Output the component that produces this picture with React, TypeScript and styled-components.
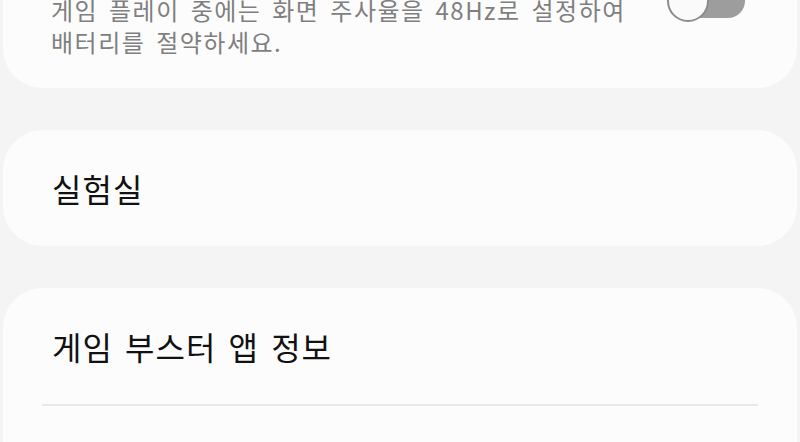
import styled, { createGlobalStyle } from "styled-components";

const GlobalStyle = createGlobalStyle`
  html, body {
    margin: 0;
    padding: 0;
    background: #f4f4f4;
    overflow: hidden;
  }
  body {
    font-family: "Noto Sans CJK KR", "Noto Sans", sans-serif;
  }
`;

const Page = styled.div`
  display: flex;
  flex-direction: column;
  gap: 42px;
  padding: 0 3px;
  margin-top: -40px;
`;

const Card = styled.section<{ $open?: boolean }>`
  background: #fcfcfc;
  border-radius: ${(p) => (p.$open ? "40px 40px 0 0" : "40px")};
  display: flex;
  flex-direction: column;
  padding-bottom: ${(p) => (p.$open ? "60px" : "0")};
`;

const SwitchRow = styled.div`
  display: flex;
  align-items: flex-start;
  justify-content: space-between;
  padding: 24px 52px 30px 48px;
`;

const Description = styled.p`
  margin: 0;
  padding-top: 10px;
  font-size: 24px;
  line-height: 32px;
  color: #7f7f7f;
  letter-spacing: 1.5px;
  word-spacing: 4px;
`;

const Toggle = styled.div`
  position: relative;
  width: 78px;
  height: 38px;
  flex-shrink: 0;
`;

const Track = styled.div`
  position: absolute;
  left: 6px;
  top: 0;
  width: 72px;
  height: 34px;
  border-radius: 17px;
  background: #9d9d9d;
`;

const Thumb = styled.div`
  position: absolute;
  left: 0;
  top: -4px;
  width: 38px;
  height: 38px;
  border-radius: 50%;
  background: #fafafa;
  border: 2px solid #8c8c8c;
`;

const MenuRow = styled.div`
  height: 116px;
  display: flex;
  align-items: center;
  padding: 0 49px;
  font-size: 32px;
  color: #111;
  letter-spacing: 1px;
  word-spacing: 4px;
`;

const Divider = styled.hr`
  margin: 0 39px;
  border: none;
  height: 2px;
  background: #e8e8e8;
`;

export default function App() {
  return (
    <>
      <GlobalStyle />
      <Page>
        <Card>
          <SwitchRow>
            <Description>
              게임 플레이 중에는 화면 주사율을 48Hz로 설정하여
              <br />
              배터리를 절약하세요.
            </Description>
            <Toggle>
              <Track />
              <Thumb />
            </Toggle>
          </SwitchRow>
        </Card>
        <Card>
          <MenuRow>실험실</MenuRow>
        </Card>
        <Card $open>
          <MenuRow>게임 부스터 앱 정보</MenuRow>
          <Divider />
        </Card>
      </Page>
    </>
  );
}
